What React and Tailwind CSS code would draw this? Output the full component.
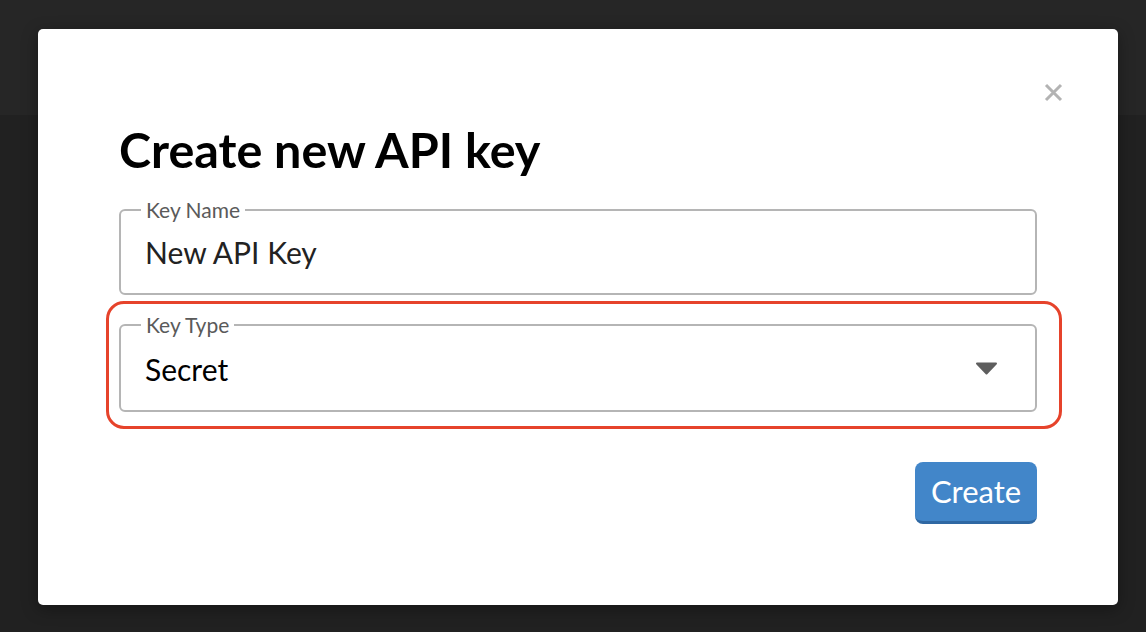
import React, { useState } from "react";

function CloseIcon() {
  return (
    <svg width="19" height="19" viewBox="0 0 19 19" fill="none">
      <path d="M2 2L17 17M17 2L2 17" stroke="#b3b3b3" strokeWidth="3" strokeLinecap="butt" />
    </svg>
  );
}

function Caret() {
  return (
    <svg width="23" height="13" viewBox="0 0 23 13">
      <path d="M2 1.5H21L11.5 11.5Z" fill="#5e5e5e" stroke="#5e5e5e" strokeWidth="2" strokeLinejoin="round" />
    </svg>
  );
}

function Field({ label, children }) {
  return (
    <fieldset className="border-2 border-[#b5b5b5] rounded-[6px] pl-[24px] pr-[36px] pt-[12px] pb-[23px]">
      <legend className="ml-[-4px] px-[5px] text-[21px] leading-[24px] text-[#5a5a5a]">{label}</legend>
      {children}
    </fieldset>
  );
}

export default function App() {
  const [name, setName] = useState("New API Key");

  return (
    <div className="h-[632px] w-full bg-[linear-gradient(to_bottom,#262626_115px,#212121_115px)] pt-[29px] pl-[38px]" style={{ fontFamily: "Lato, 'Open Sans', sans-serif" }}>
      <div className="w-[1080px] h-[576px] bg-white rounded-[5px] px-[81px] pt-[54px] shadow-[0_4px_16px_rgba(0,0,0,0.35)]">
        <div className="flex justify-end -mr-[26px]">
          <button className="w-[19px] h-[19px] flex items-center justify-center">
            <CloseIcon />
          </button>
        </div>

        <h2 className="mt-[18px] text-[48.5px] font-bold text-black leading-[1.2]">Create new API key</h2>

        <div className="mt-[20px] flex flex-col gap-[18px]">
          <Field label="Key Name">
            <input
              value={name}
              onChange={(e) => setName(e.target.value)}
              className="w-full bg-transparent text-[30px] leading-[1.2] text-[#222] outline-none p-0"
              style={{ fontFamily: "Lato, 'Open Sans', sans-serif" }}
            />
          </Field>

          <div className="relative">
            <div className="absolute top-[-12px] bottom-[-17px] left-[-13px] right-[-25px] border-[3.5px] border-[#e6432b] rounded-[18px] pointer-events-none" />
            <Field label="Key Type">
              <div className="flex items-center justify-between pt-[2px]">
                <span className="text-[30px] leading-[1.2] text-black">Secret</span>
                <span className="mr-[1px] mt-[-2px]"><Caret /></span>
              </div>
            </Field>
          </div>
        </div>

        <div className="mt-[50px] flex justify-end">
          <button className="w-[122px] h-[62px] rounded-[8px] bg-[#4286c9] border-b-[3px] border-[#2f68a3] text-white text-[31px] leading-none">
            Create
          </button>
        </div>
      </div>
    </div>
  );
}
